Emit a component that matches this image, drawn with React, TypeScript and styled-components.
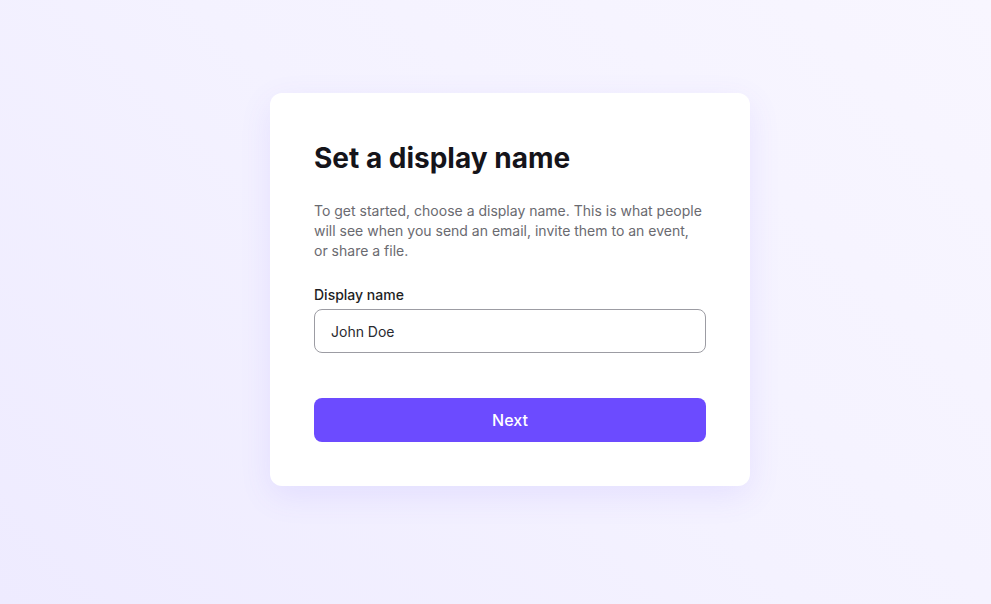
import React, { useState, ChangeEvent } from 'react'
import styled, { createGlobalStyle } from 'styled-components'

const GlobalStyle = createGlobalStyle`
  html, body {
    margin: 0;
    padding: 0;
    height: 100%;
  }
  body {
    font-family: Inter, 'Noto Sans', sans-serif;
    -webkit-font-smoothing: antialiased;
  }
  #root {
    height: 100%;
  }
  * {
    box-sizing: border-box;
  }
`

const App: React.FC = () => {
  const [displayName, setDisplayName] = useState('John Doe')
  const onDisplayNameChange = (e: ChangeEvent<HTMLInputElement>) => {
    setDisplayName(e.target.value)
  }
  return (
    <>
      <GlobalStyle />
      <Page>
        <Card>
          <Title>Set a display name</Title>
          <Description>
            To get started, choose a display name. This is what people will see when you send an
            email, invite them to an event, or share a file.
          </Description>
          <Field>
            <Label htmlFor='display-name'>Display name</Label>
            <Input id='display-name' value={displayName} onChange={onDisplayNameChange} />
          </Field>
          <NextButton type='button'>Next</NextButton>
        </Card>
      </Page>
    </>
  )
}

export default App

const Page = styled.div`
  min-height: 100vh;
  display: flex;
  align-items: center;
  justify-content: center;
  padding: 0 0 25px 29px;
  background: linear-gradient(45deg, #eeebff 0%, #f4f2ff 50%, #f8f6ff 100%);
`

const Card = styled.div`
  width: 480px;
  padding: 45px 44px 44px;
  background: #ffffff;
  border-radius: 12px;
  box-shadow: 0 10px 32px rgba(108, 75, 255, 0.1);
  display: flex;
  flex-direction: column;
`

const Title = styled.h1`
  margin: 0;
  font-size: 28px;
  line-height: 40px;
  font-weight: 700;
  color: #15141a;
`

const Description = styled.p`
  margin: 23px 0 0;
  font-size: 14px;
  line-height: 20px;
  color: #6a6a70;
`

const Field = styled.div`
  margin-top: 24px;
  display: flex;
  flex-direction: column;
  gap: 4px;
`

const Label = styled.label`
  font-size: 14px;
  line-height: 20px;
  font-weight: 500;
  color: #1e1e24;
`

const Input = styled.input`
  height: 44px;
  padding: 0 16px;
  border: 1px solid #9c9ca3;
  border-radius: 8px;
  font-family: inherit;
  font-size: 14px;
  color: #2a2a30;
  outline: none;
`

const NextButton = styled.button`
  margin-top: 45px;
  height: 44px;
  border: none;
  border-radius: 8px;
  background: #6c4bff;
  color: #ffffff;
  font-family: inherit;
  font-size: 16px;
  font-weight: 500;
  cursor: pointer;
`
